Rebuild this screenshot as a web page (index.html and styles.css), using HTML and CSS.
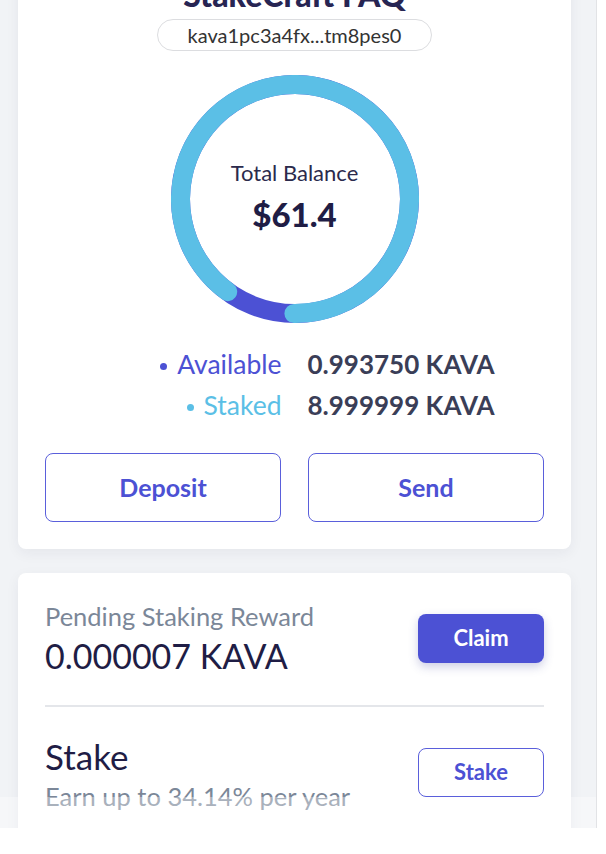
FILE: index.html
```html
<!DOCTYPE html>
<html>
<head>
<meta charset="utf-8">
<link rel="stylesheet" href="styles.css">
</head>
<body>
<div class="viewport">
  <div class="scroller">
    <section class="card wallet">
      <h1 class="title">StakeCraft FAQ</h1>
      <div class="address">kava1pc3a4fx...tm8pes0</div>
      <div class="donut">
        <svg width="248" height="248" viewBox="0 0 248 248">
          <circle cx="124" cy="124" r="114.5" fill="none" stroke="#4c51d4" stroke-width="19"/>
          <circle cx="124" cy="124" r="114.5" fill="none" stroke="#5bbfe6" stroke-width="19" stroke-linecap="round" stroke-dasharray="647.9 719.4" transform="rotate(126 124 124)"/>
        </svg>
        <div class="donut-text">
          <div class="donut-label">Total Balance</div>
          <div class="donut-value">$61.4</div>
        </div>
      </div>
      <div class="legend">
        <div class="legend-label available"><span class="dot"></span>Available</div>
        <div class="legend-value">0.993750 KAVA</div>
        <div class="legend-label staked"><span class="dot"></span>Staked</div>
        <div class="legend-value">8.999999 KAVA</div>
      </div>
      <div class="actions">
        <button class="btn-outline big">Deposit</button>
        <button class="btn-outline big">Send</button>
      </div>
    </section>
    <section class="card rewards">
      <div class="row">
        <div class="row-text">
          <div class="muted">Pending Staking Reward</div>
          <div class="amount">0.000007 KAVA</div>
        </div>
        <button class="btn-solid">Claim</button>
      </div>
      <div class="divider"></div>
      <div class="row stake-row">
        <div class="row-text">
          <div class="heading">Stake</div>
          <div class="muted sub">Earn up to 34.14% per year</div>
        </div>
        <button class="btn-outline small">Stake</button>
      </div>
    </section>
  </div>
  <div class="bottom-fade"></div>
</div>
</body>
</html>
```

FILE: styles.css
```css
* { box-sizing: border-box; }
html, body { margin: 0; padding: 0; background: #ffffff; }
body { font-family: Lato, "Open Sans", sans-serif; }

.viewport {
  position: relative;
  width: 597px;
  height: 828px;
  overflow: hidden;
  background: #f1f3f6;
  border-right: 1px solid #e2e3e6;
}

.scroller {
  margin-top: -54px;
  padding: 0 25px 0 18px;
  display: flex;
  flex-direction: column;
  gap: 24px;
}

.card {
  background: #ffffff;
  border-radius: 8px;
  box-shadow: 0 4px 14px rgba(30, 40, 70, 0.06);
  padding: 0 27px;
}

.wallet {
  display: flex;
  flex-direction: column;
  align-items: center;
  padding-top: 29px;
  padding-bottom: 27px;
}

.title {
  margin: 0;
  font-size: 32px;
  line-height: 40px;
  font-weight: 900;
  color: #272553;
}

.address {
  margin-top: 4px;
  width: 275px;
  height: 32px;
  border: 1px solid #dcdde0;
  border-radius: 16px;
  text-align: center;
  font-size: 20px;
  line-height: 30px;
  color: #333333;
}

.donut {
  position: relative;
  margin-top: 24px;
  width: 248px;
  height: 248px;
}
.donut svg { display: block; }
.donut-text {
  position: absolute;
  inset: 0;
  display: flex;
  flex-direction: column;
  align-items: center;
  justify-content: center;
  padding-bottom: 6px;
}
.donut-label {
  font-size: 22px;
  line-height: 26px;
  color: #2b2a4c;
}
.donut-value {
  margin-top: 10px;
  font-size: 33px;
  line-height: 36px;
  font-weight: 900;
  color: #1f1d45;
}

.legend {
  margin-top: 26px;
  width: 100%;
  display: grid;
  grid-template-columns: 1fr 1fr;
  column-gap: 26px;
  row-gap: 11px;
  line-height: 30px;
}
.legend-label {
  display: flex;
  justify-content: flex-end;
  align-items: center;
  font-size: 26.5px;
}
.legend-label .dot {
  width: 7px;
  height: 7px;
  border-radius: 50%;
  margin-right: 10px;
  margin-top: 4px;
  background: currentColor;
}
.available { color: #4c51d4; }
.staked { color: #5bbfe6; }
.legend-value {
  font-size: 26px;
  font-weight: 700;
  color: #3a3e57;
}

.actions {
  margin-top: 33px;
  width: 100%;
  display: grid;
  grid-template-columns: 1fr 1fr;
  gap: 27px;
}

button { font-family: inherit; cursor: pointer; }

.btn-outline {
  background: #ffffff;
  border: 1.5px solid #5a5fdb;
  border-radius: 8px;
  color: #4c51d4;
  font-weight: 700;
  padding-bottom: 3px;
}
.btn-outline.big {
  height: 69px;
  font-size: 25px;
}
.btn-outline.small {
  width: 126px;
  height: 49px;
  font-size: 22px;
}

.rewards {
  padding-top: 28px;
  padding-bottom: 40px;
}

.row {
  display: flex;
  align-items: center;
  justify-content: space-between;
}
.row-text { display: flex; flex-direction: column; }

.muted {
  font-size: 25.5px;
  line-height: 30px;
  color: #7b8798;
}
.amount {
  margin-top: 6px;
  font-size: 34px;
  line-height: 38px;
  color: #1f1d45;
}
.heading {
  font-size: 35px;
  line-height: 44px;
  color: #1f1d45;
}
.sub { margin-top: 3px; }

.btn-solid {
  width: 126px;
  height: 49px;
  border: none;
  border-radius: 8px;
  background: #4c51d4;
  color: #ffffff;
  font-size: 22px;
  font-weight: 700;
  padding-bottom: 2px;
  box-shadow: 0 4px 10px rgba(60, 64, 150, 0.25);
}

.divider {
  margin: 30px 0 27px;
  height: 2px;
  background: #e4e6ea;
}

.stake-row { align-items: flex-start; }
.stake-row .btn-outline { margin-top: 14px; }

.bottom-fade {
  position: absolute;
  left: 0;
  right: 0;
  bottom: 0;
  height: 31px;
  background: rgba(255, 255, 255, 0.35);
}
```
